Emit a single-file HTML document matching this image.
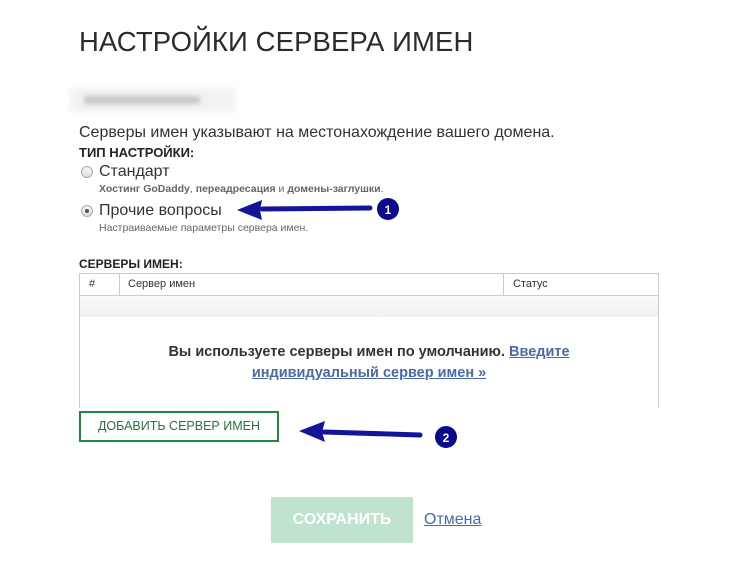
<!DOCTYPE html>
<html><head><meta charset="utf-8"><style>
*{margin:0;padding:0;box-sizing:border-box}
body{width:740px;height:563px;background:#fff;font-family:"Liberation Sans",sans-serif;color:#222;position:relative;overflow:hidden}
.a{position:absolute;white-space:nowrap}
h1{position:absolute;left:79px;top:26px;font-size:27.5px;font-weight:normal;color:#2b2b2b;letter-spacing:0.1px}
.radio{position:absolute;width:12px;height:12px;border-radius:50%;border:1px solid #aaa;background:linear-gradient(#f6f6f6,#ddd)}
.radio.on::after{content:"";position:absolute;left:3px;top:3px;width:4px;height:4px;border-radius:50%;background:#555}
.sub{font-size:10.5px;color:#666}
.tb{position:absolute;left:79px;top:273px;width:580px;height:135px;border:1px solid #ccc;border-bottom:none}
</style></head><body>
<h1>НАСТРОЙКИ СЕРВЕРА ИМЕН</h1>
<div class="a" style="left:70px;top:88px;width:165px;height:24px;background:#f2f2f2;filter:blur(3px)"></div>
<div class="a" style="left:84px;top:96px;width:116px;height:8px;background:#c8c8c8;filter:blur(2px)"></div>
<div class="a" style="left:79px;top:124px;font-size:16px;color:#333">Серверы имен указывают на местонахождение вашего домена.</div>
<div class="a" style="left:79px;top:145px;font-size:13px;font-weight:bold;color:#222">ТИП НАСТРОЙКИ:</div>
<div class="radio" style="left:81px;top:166px"></div>
<div class="a" style="left:99px;top:163px;font-size:16px;color:#333">Стандарт</div>
<div class="a sub" style="left:99px;top:183px;font-weight:bold">Хостинг GoDaddy<span style="font-weight:normal">,</span> переадресация <span style="font-weight:normal">и</span> домены-заглушки<span style="font-weight:normal">.</span></div>
<div class="radio on" style="left:81px;top:205px"></div>
<div class="a" style="left:99px;top:202px;font-size:16px;color:#333">Прочие вопросы</div>
<div class="a sub" style="left:99px;top:222px">Настраиваемые параметры сервера имен.</div>
<div class="a" style="left:79px;top:257px;font-size:12px;font-weight:bold;color:#222">СЕРВЕРЫ ИМЕН:</div>
<div class="tb"></div>
<div class="a" style="left:79px;top:273px;width:580px;height:23px;border:1px solid #ccc;font-size:11px;color:#333">
<span class="a" style="left:9px;top:4px">#</span>
<span class="a" style="left:39px;top:0;height:21px;border-left:1px solid #ccc"></span>
<span class="a" style="left:48px;top:4px">Сервер имен</span>
<span class="a" style="left:423px;top:0;height:21px;border-left:1px solid #ccc"></span>
<span class="a" style="left:433px;top:4px">Статус</span>
</div>
<div class="a" style="left:80px;top:296px;width:578px;height:21px;background:linear-gradient(#fafafa,#f0f0f0)"></div>
<div class="a" style="left:80px;top:342px;width:578px;text-align:center;font-size:14.5px;font-weight:bold;color:#333;line-height:21px;white-space:normal">Вы используете серверы имен по умолчанию. <span style="color:#4a6aa8;text-decoration:underline">Введите<br>индивидуальный сервер имен »</span></div>
<div class="a" style="left:79px;top:411px;width:200px;height:31px;border:2px solid #1e8a3e;color:#1e7a3a;font-size:12.5px;text-align:center;line-height:27px">ДОБАВИТЬ СЕРВЕР ИМЕН</div>
<svg class="a" style="left:0;top:0" width="740" height="563">
<path d="M370 208 L262 209" stroke="#14149a" stroke-width="5" stroke-linecap="round"/>
<path d="M237 210 L262 200 L260 210 L262 220 Z" fill="#14149a"/>
<circle cx="388" cy="209" r="11" fill="#0a0a8a"/>
<text x="388" y="214" font-size="12" font-weight="bold" fill="#fff" text-anchor="middle" font-family="Liberation Sans">1</text>
<path d="M420 435 L324 432" stroke="#14149a" stroke-width="5" stroke-linecap="round"/>
<path d="M299 431 L325 421 L322 432 L325 442 Z" fill="#14149a"/>
<circle cx="446" cy="437" r="11" fill="#0a0a8a"/>
<text x="446" y="442" font-size="12" font-weight="bold" fill="#fff" text-anchor="middle" font-family="Liberation Sans">2</text>
</svg>
<div class="a" style="left:271px;top:497px;width:142px;height:46px;background:#bfe3cc;color:#fff;font-size:16px;font-weight:bold;text-align:center;line-height:46px">СОХРАНИТЬ</div>
<div class="a" style="left:424px;top:511px;font-size:16px;color:#4a6aa8;text-decoration:underline">Отмена</div>
</body></html>
